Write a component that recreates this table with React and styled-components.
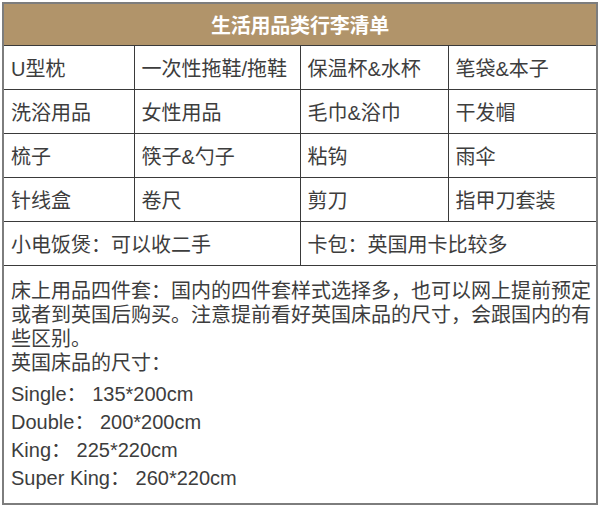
import React from "react";
import styled, { createGlobalStyle } from "styled-components";

const GlobalStyle = createGlobalStyle`
  html, body {
    margin: 0;
    padding: 0;
    background: #ffffff;
  }
  body {
    font-family: "Liberation Sans", "Noto Sans CJK SC", sans-serif;
    color: #3d3d3d;
  }
`;

const Wrap = styled.div`
  padding: 2px;
  width: 600px;
  box-sizing: border-box;
`;

const Table = styled.table`
  width: 100%;
  table-layout: fixed;
  border-collapse: collapse;
  border: 2px solid #7d7d7d;
  font-size: 20px;
`;

const Col = styled.col`
  width: ${(p) => p.$w}px;
`;

const HeaderCell = styled.th`
  height: 41px;
  padding: 0;
  background: #b1946a;
  color: #ffffff;
  font-weight: 700;
  font-size: 20px;
  text-align: center;
  border-bottom: 1px solid #3a3a3a;
  letter-spacing: -0.2px;
`;

const Row = styled.tr`
  height: 44px;
`;

const Cell = styled.td`
  padding: 2px 0 0 7px;
  border: 1px solid #3a3a3a;
  vertical-align: middle;
  white-space: nowrap;
  overflow: hidden;
  line-height: 24px;
`;

const NoteCell = styled.td`
  box-sizing: border-box;
  height: 238px;
  padding: 13px 0 0 7px;
  vertical-align: top;
  border-top: 1px solid #3a3a3a;
`;

const Para = styled.div`
  line-height: 24px;
  white-space: nowrap;
`;

const SizeList = styled.div`
  margin-top: 5px;
`;

const SizeLine = styled.div`
  line-height: 28px;
  white-space: nowrap;
`;

const rows = [
  ["U型枕", "一次性拖鞋/拖鞋", "保温杯&水杯", "笔袋&本子"],
  ["洗浴用品", "女性用品", "毛巾&浴巾", "干发帽"],
  ["梳子", "筷子&勺子", "粘钩", "雨伞"],
  ["针线盒", "卷尺", "剪刀", "指甲刀套装"],
];

const sizes = [
  "Single： 135*200cm",
  "Double： 200*200cm",
  "King： 225*220cm",
  "Super King： 260*220cm",
];

export default function App() {
  return (
    <>
      <GlobalStyle />
      <Wrap>
        <Table>
          <colgroup>
            <Col $w={131} />
            <Col $w={166} />
            <Col $w={148} />
            <col />
          </colgroup>
          <thead>
            <tr>
              <HeaderCell colSpan={4}>生活用品类行李清单</HeaderCell>
            </tr>
          </thead>
          <tbody>
            {rows.map((r, i) => (
              <Row key={i}>
                {r.map((c) => (
                  <Cell key={c}>{c}</Cell>
                ))}
              </Row>
            ))}
            <Row>
              <Cell colSpan={2}>小电饭煲：可以收二手</Cell>
              <Cell colSpan={2}>卡包：英国用卡比较多</Cell>
            </Row>
            <tr>
              <NoteCell colSpan={4}>
                <Para>
                  床上用品四件套：国内的四件套样式选择多，也可以网上提前预定
                  <br />
                  或者到英国后购买。注意提前看好英国床品的尺寸，会跟国内的有
                  <br />
                  些区别。
                  <br />
                  英国床品的尺寸：
                </Para>
                <SizeList>
                  {sizes.map((s) => (
                    <SizeLine key={s}>{s}</SizeLine>
                  ))}
                </SizeList>
              </NoteCell>
            </tr>
          </tbody>
        </Table>
      </Wrap>
    </>
  );
}
